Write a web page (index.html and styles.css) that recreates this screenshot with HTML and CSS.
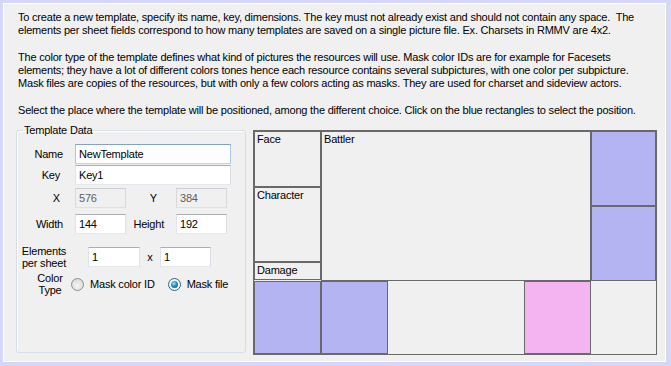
FILE: index.html
```html
<!DOCTYPE html>
<html lang="en">
<head>
  <meta charset="UTF-8">
  <title>New Template</title>
  <link rel="stylesheet" href="styles.css">
</head>
<body>

  <div class="window">

    <!-- Help text -->
    <div class="intro">
      <p>To create a new template, specify its name, key, dimensions. The key must not already exist and should not contain any space.&nbsp; The<br>elements per sheet fields correspond to how many templates are saved on a single picture file. Ex. Charsets in RMMV are 4x2.</p>
      <p>The color type of the template defines what kind of pictures the resources will use. Mask color IDs are for example for Facesets<br>elements; they have a lot of different colors tones hence each resource contains several subpictures, with one color per subpicture.<br>Mask files are copies of the resources, but with only a few colors acting as masks. They are used for charset and sideview actors.</p>
      <p>Select the place where the template will be positioned, among the different choice. Click on the blue rectangles to select the position.</p>
    </div>

    <div class="editor">

      <!-- Template data -->
      <fieldset class="group">
        <legend>Template Data</legend>

        <div class="row row-name">
          <label class="lbl lbl-name">Name</label>
          <input class="field field-long focused" type="text" value="NewTemplate">
        </div>

        <div class="row row-key">
          <label class="lbl lbl-key">Key</label>
          <input class="field field-long" type="text" value="Key1">
        </div>

        <div class="row row-pos">
          <label class="lbl lbl-x">X</label>
          <input class="field field-short locked" type="text" value="576" readonly>
          <label class="lbl lbl-y">Y</label>
          <input class="field field-short locked" type="text" value="384" readonly>
        </div>

        <div class="row row-size">
          <label class="lbl lbl-name">Width</label>
          <input class="field field-short" type="text" value="144">
          <label class="lbl lbl-height">Height</label>
          <input class="field field-short" type="text" value="192">
        </div>

        <div class="row row-elements">
          <label class="lbl-stack lbl-elements">Elements<br>per sheet</label>
          <input class="field field-short field-first" type="text" value="1">
          <span class="times">x</span>
          <input class="field field-short" type="text" value="1">
        </div>

        <div class="row row-color">
          <label class="lbl-stack lbl-color">Color<br>Type</label>
          <span class="radio"></span>
          <span class="radio-text">Mask color ID</span>
          <span class="radio checked"></span>
          <span class="radio-text">Mask file</span>
        </div>
      </fieldset>

      <!-- Position picker -->
      <div class="layout">
        <div class="stack">
          <div class="cell face">Face</div>
          <div class="cell character">Character</div>
          <div class="cell damage">Damage</div>
        </div>
        <div class="cell battler">Battler</div>
        <div class="cell pick side-top"></div>
        <div class="cell pick side-bottom"></div>
        <div class="cell pick bottom-1"></div>
        <div class="cell pick bottom-2"></div>
        <div class="cell chosen bottom-5"></div>
      </div>

    </div>
  </div>

</body>
</html>
```

FILE: styles.css
```css
* {
  box-sizing: border-box;
}

body {
  margin: 0;
  background-color: #d6d6fa;
  font-family: 'Liberation Sans', Arial, sans-serif;
  font-size: 11px;
  letter-spacing: -0.2px;
  color: #000;
}

.window {
  width: 663px;
  height: 359px;
  margin: 3px 0 0 3px;
  background-color: #f0f0f0;
  border: 1px solid #fff;
  box-shadow: 1px 1px 0 #dcdcdc;
}

.intro {
  padding: 7px 0 0 14px;
  white-space: nowrap;
}

.intro p {
  margin: 0 0 14px 0;
  line-height: 13px;
}

.intro p:last-child {
  margin-bottom: 0;
}

.editor {
  display: flex;
  gap: 7px;
  margin-top: 7px;
  padding-left: 12px;
}

/* Group box */
.group {
  width: 230px;
  height: 229px;
  margin: 0;
  padding: 7px 0 0 0;
  border: 1px solid #d5dfe5;
  border-radius: 3px;
  box-shadow: inset 1px 1px 0 #fff;
}

.group legend {
  margin-left: 6px;
  padding: 0 1px;
  line-height: 13px;
}

.row {
  display: flex;
  align-items: center;
}

.row-key {
  margin-top: 1px;
}

.row-pos {
  margin-top: 3px;
}

.row-size {
  margin-top: 6px;
}

.row-elements {
  margin-top: 10px;
}

.row-color {
  margin-top: 3px;
}

.lbl {
  text-align: right;
}

.lbl-name {
  width: 46px;
  margin-right: 12px;
}

.lbl-key {
  width: 43px;
  margin-right: 15px;
}

.lbl-x {
  width: 43px;
  margin-right: 15px;
}

.lbl-y {
  width: 31px;
  margin-right: 19px;
}

.lbl-height {
  width: 38px;
  margin-right: 12px;
}

.lbl-stack {
  text-align: center;
  line-height: 12px;
}

.lbl-elements {
  width: 54px;
  margin-right: 17px;
  padding-top: 1px;
}

.lbl-color {
  width: 34px;
  margin-left: 16px;
  margin-right: 4px;
}

.field {
  height: 20px;
  padding: 0 3px;
  font-family: inherit;
  font-size: 11px;
  letter-spacing: inherit;
  color: #000;
  background-color: #fff;
  border: 1px solid;
  border-color: #abadb3 #dbdfe6 #e3e9ef #e2e3ea;
  border-radius: 0;
  outline: none;
}

.field.focused {
  border-color: #7da2ce #a9c8e8 #b8d4ee #a9c8e8;
}

.field.locked {
  background-color: #f0f0f0;
  color: #5f5f5f;
  border-color: #cfcfcf #d9d9d9 #e0e0e0 #d9d9d9;
}

.field-long {
  width: 156px;
}

.field-short {
  width: 51px;
}

.field-first {
  width: 52px;
}

.times {
  width: 20px;
  text-align: center;
}

/* Radio buttons */
.radio {
  position: relative;
  width: 13px;
  height: 13px;
  border: 1px solid #8e8f8f;
  border-radius: 50%;
  background: radial-gradient(circle at 50% 60%, #f6f6f6 0%, #e2e2e2 55%, #cfcfcf 100%);
}

.radio.checked {
  margin-left: 13px;
  border-color: #2c628b;
  background: radial-gradient(circle, #fff 0%, #eef3f6 100%);
}

.radio.checked::after {
  content: "";
  position: absolute;
  left: 2px;
  top: 2px;
  width: 7px;
  height: 7px;
  border-radius: 50%;
  background: radial-gradient(circle at 40% 35%, #a9e3f8 0%, #2b8bc4 45%, #0c4a78 100%);
}

.radio-text {
  margin-left: 6px;
}

/* Position picker */
.layout {
  display: grid;
  grid-template-columns: 67px 67px 68px 68px 67px 65px;
  grid-template-rows: 75px 75px 73px;
  width: 404px;
  height: 225px;
  margin-top: 6px;
  border: 1px solid #696969;
  background-color: #f0f0f0;
}

.cell {
  border: 1px solid #696969;
  padding: 1px 2px;
  line-height: 13px;
}

.stack {
  grid-column: 1;
  grid-row: 1 / 3;
  display: flex;
  flex-direction: column;
}

.face {
  height: 56px;
}

.character {
  height: 75px;
}

.damage {
  height: 18px;
}

.battler {
  grid-column: 2 / 6;
  grid-row: 1 / 3;
}

.pick {
  background-color: #b4b4f2;
}

.chosen {
  background-color: #f4b4f2;
}

.side-top {
  grid-column: 6;
  grid-row: 1;
}

.side-bottom {
  grid-column: 6;
  grid-row: 2;
}

.bottom-1 {
  grid-column: 1;
  grid-row: 3;
}

.bottom-2 {
  grid-column: 2;
  grid-row: 3;
}

.bottom-5 {
  grid-column: 5;
  grid-row: 3;
}
```
